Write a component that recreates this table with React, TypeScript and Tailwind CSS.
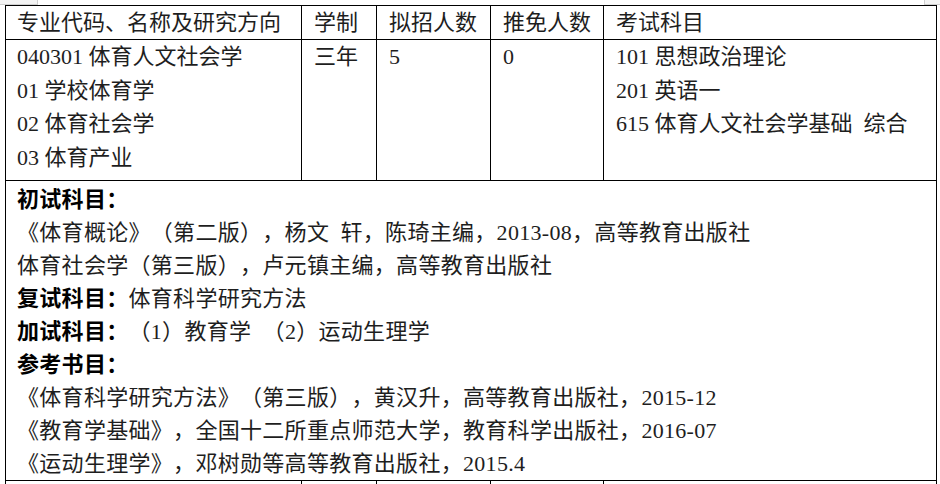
import React from "react";

const S = "\u2002";

function Line({ children }: { children: React.ReactNode }) {
  return <div className="whitespace-pre">{children}</div>;
}

export default function App() {
  return (
    <div
      lang="zh-CN"
      className="w-[940px] h-[484px] overflow-hidden bg-white text-[#1e1e1e] text-[22px] [text-spacing-trim:space-all] font-['Liberation_Serif','Noto_Sans_CJK_SC',serif]"
    >
      <div className="flex h-[5px] justify-between">
        <div className="w-[38px] h-[5px] border-r border-b border-[#cfcfcf] bg-[#f3f3f3]" />
        <div className="w-[16px] h-[5px] border-l border-b border-[#cfcfcf] bg-[#f3f3f3]" />
      </div>
      <div className="pl-[5px]">
        <div className="grid w-[932px] grid-cols-[296px_75px_114px_113px_333px] border-l border-t border-black">
          {/* header */}
          <div className="h-[34px] border-r border-b border-black pl-[11px] flex items-center leading-[33px]">专业代码、名称及研究方向</div>
          <div className="h-[34px] border-r border-b border-black pl-[12px] flex items-center leading-[33px]">学制</div>
          <div className="h-[34px] border-r border-b border-black pl-[12px] flex items-center leading-[33px]">拟招人数</div>
          <div className="h-[34px] border-r border-b border-black pl-[12px] flex items-center leading-[33px]">推免人数</div>
          <div className="h-[34px] border-r border-b border-black pl-[12px] flex items-center leading-[33px]">考试科目</div>

          {/* row 2 */}
          <div className="h-[141px] border-r border-b border-black pl-[11px] leading-[33.5px]">
            <Line>{`040301 体育人文社会学`}</Line>
            <Line>{`01 学校体育学`}</Line>
            <Line>{`02 体育社会学`}</Line>
            <Line>{`03 体育产业`}</Line>
          </div>
          <div className="h-[141px] border-r border-b border-black pl-[12px] leading-[33.5px]">三年</div>
          <div className="h-[141px] border-r border-b border-black pl-[12px] leading-[33.5px]">5</div>
          <div className="h-[141px] border-r border-b border-black pl-[12px] leading-[33.5px]">0</div>
          <div className="h-[141px] border-r border-b border-black pl-[12px] leading-[33.5px]">
            <Line>{`101 思想政治理论`}</Line>
            <Line>{`201 英语一`}</Line>
            <Line>{`615 体育人文社会学基础${S}综合`}</Line>
          </div>

          {/* row 3 */}
          <div className="col-span-5 h-[300px] border-r border-b border-black pl-[11px] pt-[2px] leading-[33px] tracking-[0.3px]">
            <Line><span className="font-bold text-black">初试科目：</span></Line>
            <Line>{`《体育概论》（第二版），杨文${S}轩，陈琦主编，2013-08，高等教育出版社`}</Line>
            <Line>体育社会学（第三版），卢元镇主编，高等教育出版社</Line>
            <Line><span className="font-bold text-black">复试科目：</span>体育科学研究方法</Line>
            <Line><span className="font-bold text-black">加试科目：</span>{`（1）教育学${S}（2）运动生理学`}</Line>
            <Line><span className="font-bold text-black">参考书目：</span></Line>
            <Line>《体育科学研究方法》（第三版），黄汉升，高等教育出版社，2015-12</Line>
            <Line>《教育学基础》，全国十二所重点师范大学，教育科学出版社，2016-07</Line>
            <Line>《运动生理学》，邓树勋等高等教育出版社，2015.4</Line>
          </div>

          {/* row 4 (partially visible) */}
          <div className="h-[40px] border-r border-b border-black" />
          <div className="h-[40px] border-r border-b border-black" />
          <div className="h-[40px] border-r border-b border-black" />
          <div className="h-[40px] border-r border-b border-black" />
          <div className="h-[40px] border-r border-b border-black" />
        </div>
      </div>
    </div>
  );
}
